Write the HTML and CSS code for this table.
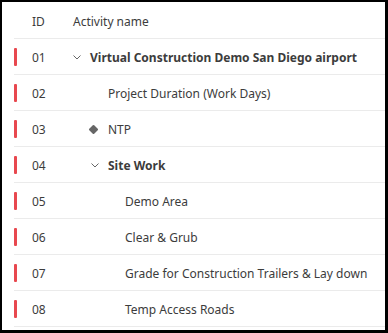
FILE: index.html
```html
<!DOCTYPE html>
<html lang="en">
<head>
  <meta charset="UTF-8" />
  <meta name="viewport" content="width=device-width, initial-scale=1.0" />
  <title>Schedule - Activities</title>
  <link rel="stylesheet" href="styles.css">
</head>
<body>
  <div class="panel">
    <div class="row head">
      <div class="id">ID</div>
      <div class="name">Activity name</div>
    </div>

    <div class="row">
      <span class="flag"></span>
      <div class="id">01</div>
      <div class="name lvl1 group">
        <svg class="chev" width="8" height="5" viewBox="0 0 8 5"><path d="M0.5 0.5 L4 4 L7.5 0.5" fill="none" stroke="#666" stroke-width="1"/></svg>
        Virtual Construction Demo San Diego airport
      </div>
    </div>

    <div class="row">
      <span class="flag"></span>
      <div class="id">02</div>
      <div class="name lvl2">Project Duration (Work Days)</div>
    </div>

    <div class="row">
      <span class="flag"></span>
      <div class="id">03</div>
      <div class="name milestone"><span class="diamond"></span>NTP</div>
    </div>

    <div class="row">
      <span class="flag"></span>
      <div class="id">04</div>
      <div class="name lvl2 group">
        <svg class="chev" width="8" height="5" viewBox="0 0 8 5"><path d="M0.5 0.5 L4 4 L7.5 0.5" fill="none" stroke="#666" stroke-width="1"/></svg>
        Site Work
      </div>
    </div>

    <div class="row">
      <span class="flag"></span>
      <div class="id">05</div>
      <div class="name lvl3">Demo Area</div>
    </div>

    <div class="row">
      <span class="flag"></span>
      <div class="id">06</div>
      <div class="name lvl3">Clear &amp; Grub</div>
    </div>

    <div class="row">
      <span class="flag"></span>
      <div class="id">07</div>
      <div class="name lvl3">Grade for Construction Trailers &amp; Lay down</div>
    </div>

    <div class="row">
      <span class="flag"></span>
      <div class="id">08</div>
      <div class="name lvl3">Temp Access Roads</div>
    </div>
  </div>
</body>
</html>
```

FILE: styles.css
```css
body { margin: 0; background: #000; font-family: "Noto Sans", "Open Sans", sans-serif; font-size: 12px; color: #3c3c3c; }
.panel { margin: 2px 0 0 2px; width: 383px; height: 328px; background: #fff; padding-left: 12px; box-sizing: border-box; }

.row { display: flex; align-items: center; height: 36px; padding-top: 1px; box-sizing: border-box; border-bottom: 1px solid #ebebeb; }
.row.head { height: 37px; padding-top: 2px; }
.flag { width: 3px; height: 18px; margin-top: -1px; background: #e8484f; border-radius: 1px; flex: none; }
.id { width: 59px; padding-left: 18px; box-sizing: border-box; flex: none; }
.flag + .id { width: 56px; padding-left: 15px; }
.name { display: flex; align-items: center; white-space: nowrap; }

.group { font-weight: bold; }
.chev { margin-right: 9px; flex: none; }
.lvl2 { padding-left: 35px; }
.lvl2.group { padding-left: 18px; }
.lvl3 { padding-left: 52px; }
.milestone { padding-left: 17px; }
.diamond { width: 7px; height: 7px; background: #666; transform: rotate(45deg); margin-right: 11px; border-radius: 1px; flex: none; }
```
